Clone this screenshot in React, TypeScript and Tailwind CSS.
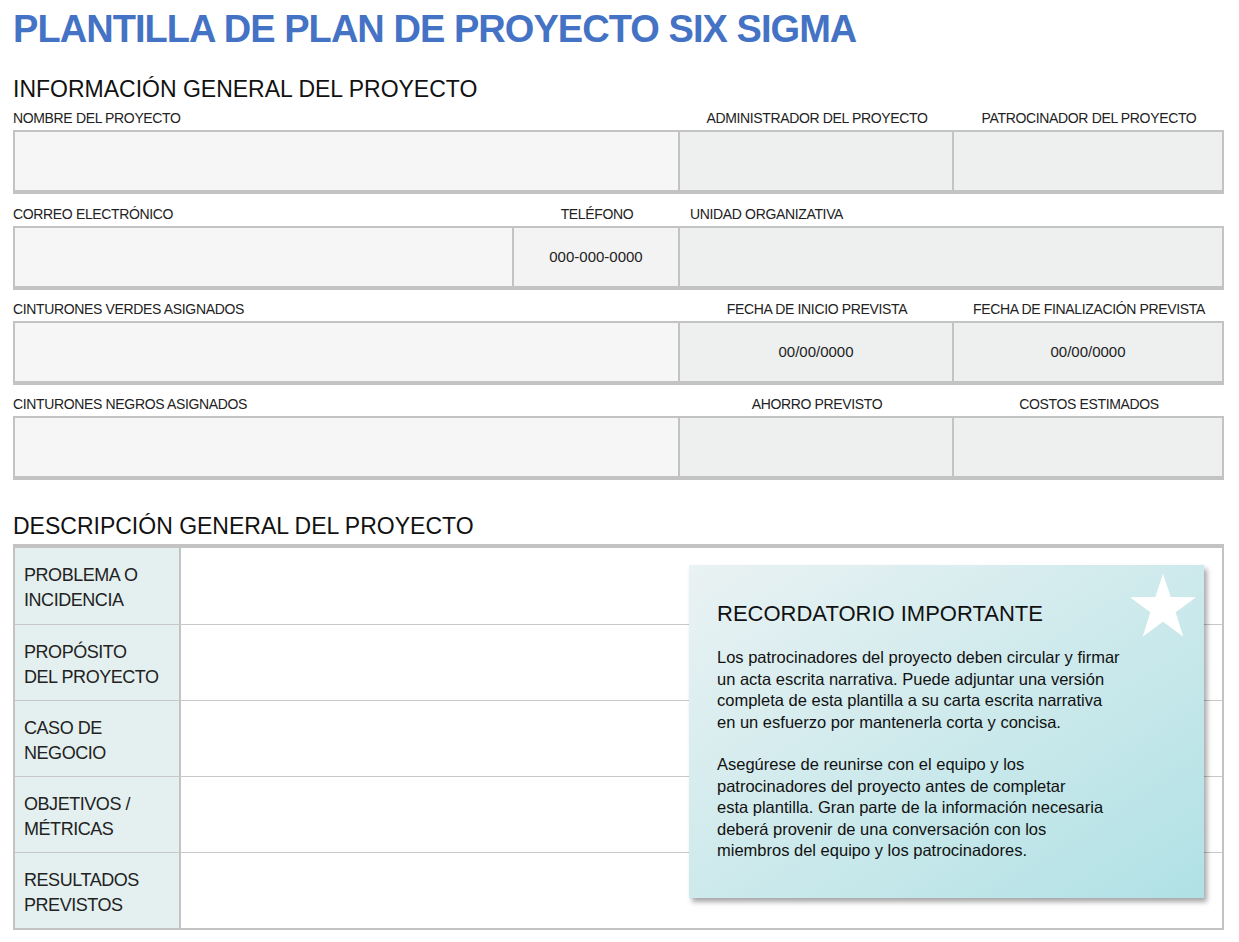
const font = { fontFamily: '"Liberation Sans", Lato, sans-serif' }

function Label({ children, className = '' }: { children?: React.ReactNode; className?: string }) {
  return <div className={`h-[28px] flex items-end pb-[1px] text-[14px] text-[#222] tracking-tight ${className}`}>{children}</div>
}

function Cell({ children, className = '' }: { children?: React.ReactNode; className?: string }) {
  return (
    <div className={`h-[64px] border-[2px] border-b-[4px] border-[#c3c3c3] flex items-center justify-center text-[15px] text-[#222] ${className}`}>
      {children}
    </div>
  )
}

const rows = [
  ['PROBLEMA O', 'INCIDENCIA'],
  ['PROPÓSITO', 'DEL PROYECTO'],
  ['CASO DE', 'NEGOCIO'],
  ['OBJETIVOS /', 'MÉTRICAS'],
  ['RESULTADOS', 'PREVISTOS'],
]

const p1 = [
  'Los patrocinadores del proyecto deben circular y firmar',
  'un acta escrita narrativa. Puede adjuntar una versión',
  'completa de esta plantilla a su carta escrita narrativa',
  'en un esfuerzo por mantenerla corta y concisa.',
]
const p2 = [
  'Asegúrese de reunirse con el equipo y los',
  'patrocinadores del proyecto antes de completar',
  'esta plantilla. Gran parte de la información necesaria',
  'deberá provenir de una conversación con los',
  'miembros del equipo y los patrocinadores.',
]

export default function App() {
  return (
    <div className="w-[1239px] h-[942px] bg-white px-[13px] pt-[7px]" style={font}>
      <h1 className="text-[38px] font-bold text-[#4472c4] leading-[44px] tracking-tight">PLANTILLA DE PLAN DE PROYECTO SIX SIGMA</h1>
      <h2 className="mt-[25px] text-[23px] text-[#111] leading-[26px]">INFORMACIÓN GENERAL DEL PROYECTO</h2>

      <div className="w-[1211px]">
        <div className="grid grid-cols-[667px_274px_270px]">
          <Label>NOMBRE DEL PROYECTO</Label>
          <Label className="justify-center">ADMINISTRADOR DEL PROYECTO</Label>
          <Label className="justify-center">PATROCINADOR DEL PROYECTO</Label>
          <Cell className="bg-[#f6f6f6]" />
          <Cell className="bg-[#eeefef] border-l-0" />
          <Cell className="bg-[#eeefef] border-l-0" />
        </div>
        <div className="grid grid-cols-[501px_166px_544px] mt-[4px]">
          <Label>CORREO ELECTRÓNICO</Label>
          <Label className="justify-center">TELÉFONO</Label>
          <Label className="pl-[10px]">UNIDAD ORGANIZATIVA</Label>
          <Cell className="bg-[#f6f6f6]" />
          <Cell className="bg-[#f3f3f3] border-l-0">000-000-0000</Cell>
          <Cell className="bg-[#eeefef] border-l-0" />
        </div>
        <div className="grid grid-cols-[667px_274px_270px] mt-[3px]">
          <Label>CINTURONES VERDES ASIGNADOS</Label>
          <Label className="justify-center">FECHA DE INICIO PREVISTA</Label>
          <Label className="justify-center">FECHA DE FINALIZACIÓN PREVISTA</Label>
          <Cell className="bg-[#f6f6f6]" />
          <Cell className="bg-[#eeefef] border-l-0">00/00/0000</Cell>
          <Cell className="bg-[#eeefef] border-l-0">00/00/0000</Cell>
        </div>
        <div className="grid grid-cols-[667px_274px_270px] mt-[3px]">
          <Label>CINTURONES NEGROS ASIGNADOS</Label>
          <Label className="justify-center">AHORRO PREVISTO</Label>
          <Label className="justify-center">COSTOS ESTIMADOS</Label>
          <Cell className="bg-[#f6f6f6]" />
          <Cell className="bg-[#eeefef] border-l-0" />
          <Cell className="bg-[#eeefef] border-l-0" />
        </div>
      </div>

      <h2 className="mt-[33px] text-[23px] text-[#111] leading-[26px]">DESCRIPCIÓN GENERAL DEL PROYECTO</h2>

      <div className="relative mt-[5px] w-[1211px] border-t-[4px] border-x-[2px] border-b-[2px] border-[#c3c3c3]">
        {rows.map((r, i) => (
          <div key={i} className={`flex h-[76px] ${i > 0 ? 'border-t-[1px] border-[#c8c8c8]' : ''}`}>
            <div className="w-[166px] bg-[#e4f0f0] border-r-[2px] border-[#c3c3c3] px-[9px] pt-[15px] text-[18px] leading-[25px] text-[#222] whitespace-nowrap tracking-tight">
              {r[0]}<br />{r[1]}
            </div>
            <div className="flex-1" />
          </div>
        ))}

        <div className="absolute left-[674px] top-[17px] w-[515px] h-[333px] bg-gradient-to-br from-[#eaf2f3] to-[#b0e1e5] shadow-[3px_4px_5px_rgba(0,0,0,0.35)] px-[28px] pt-[36px]">
          <svg className="absolute right-[8px] top-[8px]" width="66" height="64" viewBox="0 0 24 23">
            <polygon points="12,0 14.8,8.6 24,8.7 16.6,14.1 19.4,23 12,17.6 4.6,23 7.4,14.1 0,8.7 9.2,8.6" fill="#fff" />
          </svg>
          <div className="text-[22px] text-[#111] leading-[26px]">RECORDATORIO IMPORTANTE</div>
          <p className="mt-[20px] text-[16.5px] leading-[21.5px] text-[#111] whitespace-nowrap">
            {p1.map((l, i) => <span key={i} className="block">{l}</span>)}
          </p>
          <p className="mt-[21px] text-[16.5px] leading-[21.5px] text-[#111] whitespace-nowrap">
            {p2.map((l, i) => <span key={i} className="block">{l}</span>)}
          </p>
        </div>
      </div>
    </div>
  )
}
